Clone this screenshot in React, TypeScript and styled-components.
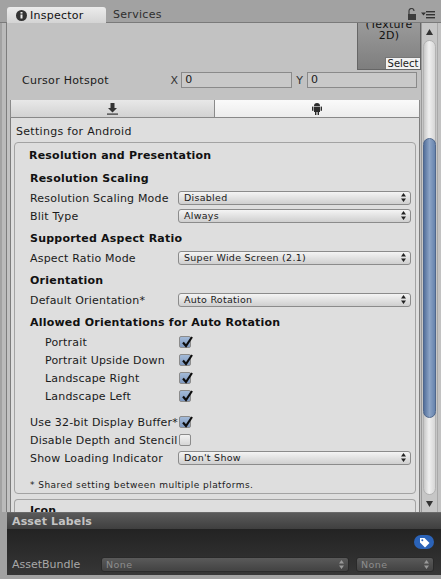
import React from 'react'
import styled, { createGlobalStyle } from 'styled-components'

const Global = createGlobalStyle`
  html, body { margin: 0; padding: 0; background: #a2a2a2; }
  * { box-sizing: border-box; }
`

const Window = styled.div`
  width: 441px;
  height: 579px;
  display: flex;
  flex-direction: column;
  overflow: hidden;
  background: #a2a2a2;
  color: #1a1a1a;
  font-family: "DejaVu Sans", sans-serif;
  font-size: 11px;
`

const TabStrip = styled.div`
  height: 23px;
  flex: none;
  display: flex;
  align-items: flex-end;
  padding: 0 3px 0 7px;
  border-bottom: 1px solid #7a7a7a;
`

const Tab = styled.div<{ $active?: boolean }>`
  width: ${p => (p.$active ? '99px' : '64px')};
  height: ${p => (p.$active ? '16px' : '15px')};
  display: flex;
  align-items: center;
  gap: 3px;
  padding-left: ${p => (p.$active ? '9px' : '7px')};
  letter-spacing: ${p => (p.$active ? '0.25px' : '0.3px')};
  color: ${p => (p.$active ? '#111' : '#2e2e2e')};
  background: ${p => (p.$active ? 'linear-gradient(#ececec, #d4d4d4)' : 'transparent')};
  border-radius: 3px 3px 0 0;
  margin-bottom: ${p => (p.$active ? '-1px' : '0')};
`

const TabTools = styled.div`
  margin-left: auto;
  display: flex;
  align-items: center;
  gap: 5px;
  margin-bottom: 1px;
  padding-right: 3px;
`

const Middle = styled.div`
  flex: 1;
  min-height: 0;
  display: flex;
  background: #c2c2c2;
`

const Gutter = styled.div`
  width: 7px;
  flex: none;
  background: #bababa;
  border-right: 1px solid #7d7d7d;
  border-left: 2px solid #a2a2a2;
`

const Column = styled.div`
  flex: 1;
  min-width: 0;
  display: flex;
  flex-direction: column;
  overflow: hidden;
  padding: 0 0 0 3px;
`

const PreviewRow = styled.div`
  height: 47px;
  flex: none;
  display: flex;
  justify-content: flex-end;
`

const Preview = styled.div`
  width: 64px;
  height: 47px;
  display: flex;
  flex-direction: column;
  align-items: center;
  justify-content: space-between;
  background: linear-gradient(#9a9a9a, #7e7e7e);
  border-right: 1px solid #666;
  border-left: 1px solid #666;
  border-bottom: 1px solid #666;
  overflow: hidden;
`

const PreviewText = styled.div`
  margin-top: -4px;
  text-align: center;
  line-height: 11px;
  font-size: 11px;
  letter-spacing: 0.3px;
  color: #111;
`

const SelectButton = styled.div`
  align-self: flex-end;
  width: 35px;
  height: 12px;
  background: #f2f2f2;
  border-left: 1px solid #777;
  border-top: 1px solid #777;
  font-size: 10px;
  line-height: 11px;
  text-align: center;
`

const HotspotRow = styled.div`
  height: 16px;
  flex: none;
  margin-top: 2px;
  display: flex;
  align-items: center;
  padding-left: 12px;
`

const HotspotLabel = styled.div`
  width: 150px;
  letter-spacing: 0.3px;
`

const Axis = styled.div`
  width: 11px;
  color: #333;
`

const NumberField = styled.div<{ $width: number }>`
  width: ${p => p.$width}px;
  height: 16px;
  margin-right: 4px;
  padding-left: 3px;
  background: #c9c9c9;
  border: 1px solid #8a8a8a;
  line-height: 14px;
`

const PlatformTabs = styled.div`
  height: 18px;
  flex: none;
  margin-top: 12px;
  width: 410px;
  display: flex;
`

const PlatformTab = styled.div<{ $active?: boolean; $width: number }>`
  width: ${p => p.$width}px;
  display: flex;
  align-items: center;
  justify-content: center;
  background: ${p => (p.$active ? 'linear-gradient(#fafafa, #ececec)' : 'linear-gradient(#e8e8e8, #d2d2d2)')};
  border-left: 1px solid #8a8a8a;
  border-bottom: 1px solid #888;
  border-right: ${p => (p.$active ? '1px solid #8a8a8a' : '0')};
`

const Panel = styled.div`
  width: 410px;
  flex: 1;
  padding: 3px 3px 0;
  background: #dedede;
  border-left: 1px solid #7d7d7d;
  border-right: 1px solid #7d7d7d;
`

const PanelTitle = styled.div`
  height: 21px;
  padding: 4px 0 0 2px;
  letter-spacing: 0.3px;
`

const Card = styled.div`
  border: 1px solid #a3a3a3;
  border-radius: 4px;
  padding: 4px 4px 0 15px;
  height: 352px;
  margin-bottom: 5px;
`

const CardTitle = styled.div`
  height: 18px;
  margin: 0 0 0 -1px;
  line-height: 18px;
  font-weight: 700;
  letter-spacing: 0.21px;
  color: #111;
`

const Heading = styled.div`
  height: 18px;
  margin: 5px 0 1px;
  line-height: 18px;
  font-weight: 700;
  letter-spacing: 0.22px;
  color: #111;
`

const Row = styled.div<{ $indent?: boolean; $gapTop?: number }>`
  height: 18px;
  margin-top: ${p => p.$gapTop ?? 0}px;
  display: grid;
  grid-template-columns: ${p => (p.$indent ? '133px' : '148px')} 1fr;
  align-items: center;
  padding-left: ${p => (p.$indent ? '15px' : '0')};
  letter-spacing: 0.19px;
  white-space: nowrap;
`

const Dropdown = styled.div`
  height: 14px;
  display: flex;
  align-items: center;
  justify-content: space-between;
  padding: 0 4px 1px 5px;
  font-size: 9.5px;
  letter-spacing: 0.27px;
  background: linear-gradient(#f4f4f4, #cfcfcf);
  border: 1px solid #8b8b8b;
  border-radius: 3px;
`

const Box = styled.div<{ $on?: boolean }>`
  width: 12px;
  height: 12px;
  margin-left: 1px;
  position: relative;
  border: 1px solid #8b8b8b;
  border-radius: 2px;
  background: ${p => (p.$on ? 'linear-gradient(#a3bad8, #7f99c0)' : 'linear-gradient(#f2f2f2, #d6d6d6)')};
`

const Tick = styled.svg`
  position: absolute;
  left: 0;
  top: -2px;
`

const Note = styled.div`
  height: 18px;
  margin-top: 9px;
  line-height: 18px;
  font-size: 9px;
  letter-spacing: 0.46px;
`

const CardCut = styled.div`
  border: 1px solid #a3a3a3;
  border-bottom: 0;
  border-radius: 4px 4px 0 0;
  height: 40px;
  padding: 4px 0 0 15px;
  font-weight: 700;
  color: #111;
`

const Scrollbar = styled.div`
  width: 17px;
  flex: none;
  display: flex;
  flex-direction: column;
  align-items: center;
  margin-right: 3px;
  background: #c6c6c6;
  border-left: 1px solid #9a9a9a;
  border-right: 1px solid #a8a8a8;
`

const ScrollCap = styled.div`
  height: 17px;
  flex: none;
  display: flex;
  align-items: center;
  justify-content: center;
`

const ScrollTrack = styled.div`
  flex: 1;
  width: 13px;
  padding-top: 97px;
  border-radius: 7px;
  background: linear-gradient(90deg, #c8c8c8, #f0f0f0 45%, #d6d6d6);
  border: 1px solid #b2b2b2;
`

const ScrollThumb = styled.div`
  height: 280px;
  margin: 0 -1px;
  border-radius: 7px;
  border: 1px solid #4f678c;
  background: linear-gradient(90deg, #54709b, #8ca4c6 50%, #6683ad);
`

const AssetLabels = styled.div`
  height: 63px;
  flex: none;
  margin: 0 0 4px 7px;
  display: flex;
  flex-direction: column;
`

const AssetHeader = styled.div`
  height: 17px;
  padding-left: 5px;
  line-height: 17px;
  font-weight: 700;
  letter-spacing: 0.15px;
  color: #c4c4c4;
  background: linear-gradient(#5a5a5a, #3f3f3f);
  border-top: 1px solid #6a6a6a;
`

const AssetBody = styled.div`
  flex: 1;
  padding: 6px 7px 0 5px;
  background: linear-gradient(#232323, #363636);
`

const TagRow = styled.div`
  display: flex;
  justify-content: flex-end;
  height: 14px;
`

const TagPill = styled.div`
  width: 20px;
  height: 14px;
  display: flex;
  align-items: center;
  justify-content: center;
  border-radius: 7px;
  background: #2b63b8;
`

const BundleRow = styled.div`
  margin-top: 8px;
  display: flex;
  align-items: center;
  color: #a8a8a8;
`

const BundleLabel = styled.div`
  width: 89px;
`

const DarkDropdown = styled.div<{ $width: number }>`
  width: ${p => p.$width}px;
  height: 15px;
  margin-right: 7px;
  display: flex;
  align-items: center;
  justify-content: space-between;
  padding: 0 4px 0 4px;
  font-size: 9.5px;
  letter-spacing: 0.4px;
  color: #8d8d8d;
  background: linear-gradient(#5a5a5a, #424242);
  border: 1px solid #2a2a2a;
  border-radius: 3px;
  &:last-child { margin-right: 0; }
`

const Updown = ({ color = '#222' }: { color?: string }) => (
  <svg width="5" height="9" viewBox="0 0 5 9" fill={color}>
    <path d="M2.5 0 5 3.5H0z M2.5 9 0 5.5h5z" />
  </svg>
)

const Check = () => (
  <Tick width="14" height="14" viewBox="0 0 14 14">
    <path d="M3 7.5 6 11 12 2" fill="none" stroke="#0d0d0d" strokeWidth="2.2" />
  </Tick>
)

const InfoIcon = () => (
  <svg width="11" height="11" viewBox="0 0 11 11">
    <circle cx="5.5" cy="5.5" r="5.5" fill="#333" />
    <rect x="4.5" y="4.5" width="2" height="4" fill="#eee" />
    <rect x="4.5" y="2" width="2" height="1.6" fill="#eee" />
  </svg>
)

const LockIcon = () => (
  <svg width="9" height="13" viewBox="0 0 9 13">
    <path d="M2 6V3a2.5 2.5 0 0 1 5 0" fill="none" stroke="#3c3c3c" strokeWidth="1.2" />
    <rect x="1" y="6" width="8" height="6" fill="#3c3c3c" />
  </svg>
)

const MenuIcon = () => (
  <svg width="14" height="8" viewBox="0 0 14 8" fill="#333">
    <path d="M0 1.5h5L2.5 4.5z" />
    <rect x="5" y="0" width="9" height="1.4" />
    <rect x="5" y="3" width="9" height="1.4" />
    <rect x="5" y="6" width="9" height="1.4" />
  </svg>
)

const StandaloneIcon = () => (
  <svg width="11" height="12" viewBox="0 0 11 12" fill="#333">
    <path d="M3.5 0h4v5H10L5.5 9.5 1 5h2.5z" />
    <rect x="0" y="10.5" width="11" height="1.2" />
  </svg>
)

const AndroidIcon = () => (
  <svg width="10" height="12" viewBox="0 0 10 12" fill="#2c2c2c">
    <path d="M2 3a3 3 0 0 1 6 0z" />
    <rect x="2" y="3.6" width="6" height="5.4" />
    <rect x="0" y="3.6" width="1.4" height="4.2" />
    <rect x="8.6" y="3.6" width="1.4" height="4.2" />
    <rect x="3" y="9" width="1.4" height="3" />
    <rect x="5.6" y="9" width="1.4" height="3" />
  </svg>
)

const ArrowIcon = ({ down }: { down?: boolean }) => (
  <svg width="7" height="6" viewBox="0 0 7 6" fill="#333">
    <path d={down ? 'M0 0h7L3.5 6z' : 'M3.5 0 7 6H0z'} />
  </svg>
)

const TagIcon = () => (
  <svg width="11" height="11" viewBox="0 0 11 11" fill="#fff">
    <path d="M1 1h4.5L10.5 6 6 10.5 1 5.5z" />
    <circle cx="3.3" cy="3.3" r="1" fill="#2b63b8" />
  </svg>
)

const Select = ({ value }: { value: string }) => (
  <Dropdown>
    {value}
    <Updown />
  </Dropdown>
)

const Tickbox = ({ on }: { on?: boolean }) => <Box $on={on}>{on && <Check />}</Box>

const App = () => (
  <Window>
    <Global />
    <TabStrip>
      <Tab $active>
        <InfoIcon />
        Inspector
      </Tab>
      <Tab>Services</Tab>
      <TabTools>
        <LockIcon />
        <MenuIcon />
      </TabTools>
    </TabStrip>
    <Middle>
      <Gutter />
      <Column>
        <PreviewRow>
          <Preview>
            <PreviewText>
              (Texture
              <br />
              2D)
            </PreviewText>
            <SelectButton>Select</SelectButton>
          </Preview>
        </PreviewRow>
        <HotspotRow>
          <HotspotLabel>Cursor Hotspot</HotspotLabel>
          <Axis>X</Axis>
          <NumberField $width={112}>0</NumberField>
          <Axis>Y</Axis>
          <NumberField $width={111}>0</NumberField>
        </HotspotRow>
        <PlatformTabs>
          <PlatformTab $width={204}>
            <StandaloneIcon />
          </PlatformTab>
          <PlatformTab $width={206} $active>
            <AndroidIcon />
          </PlatformTab>
        </PlatformTabs>
        <Panel>
          <PanelTitle>Settings for Android</PanelTitle>
          <Card>
            <CardTitle>Resolution and Presentation</CardTitle>
            <Heading>Resolution Scaling</Heading>
            <Row>
              Resolution Scaling Mode
              <Select value="Disabled" />
            </Row>
            <Row>
              Blit Type
              <Select value="Always" />
            </Row>
            <Heading>Supported Aspect Ratio</Heading>
            <Row>
              Aspect Ratio Mode
              <Select value="Super Wide Screen (2.1)" />
            </Row>
            <Heading>Orientation</Heading>
            <Row>
              Default Orientation*
              <Select value="Auto Rotation" />
            </Row>
            <Heading>Allowed Orientations for Auto Rotation</Heading>
            <Row $indent>
              Portrait
              <Tickbox on />
            </Row>
            <Row $indent>
              Portrait Upside Down
              <Tickbox on />
            </Row>
            <Row $indent>
              Landscape Right
              <Tickbox on />
            </Row>
            <Row $indent>
              Landscape Left
              <Tickbox on />
            </Row>
            <Row $gapTop={8}>
              Use 32-bit Display Buffer*
              <Tickbox on />
            </Row>
            <Row>
              Disable Depth and Stencil
              <Tickbox />
            </Row>
            <Row>
              Show Loading Indicator
              <Select value="Don't Show" />
            </Row>
            <Note>* Shared setting between multiple platforms.</Note>
          </Card>
          <CardCut>Icon</CardCut>
        </Panel>
      </Column>
      <Scrollbar>
        <ScrollCap>
          <ArrowIcon />
        </ScrollCap>
        <ScrollTrack>
          <ScrollThumb />
        </ScrollTrack>
        <ScrollCap>
          <ArrowIcon down />
        </ScrollCap>
      </Scrollbar>
    </Middle>
    <AssetLabels>
      <AssetHeader>Asset Labels</AssetHeader>
      <AssetBody>
        <TagRow>
          <TagPill>
            <TagIcon />
          </TagPill>
        </TagRow>
        <BundleRow>
          <BundleLabel>AssetBundle</BundleLabel>
          <DarkDropdown $width={248}>
            None
            <Updown color="#999" />
          </DarkDropdown>
          <DarkDropdown $width={78}>
            None
            <Updown color="#999" />
          </DarkDropdown>
        </BundleRow>
      </AssetBody>
    </AssetLabels>
  </Window>
)

export default App
